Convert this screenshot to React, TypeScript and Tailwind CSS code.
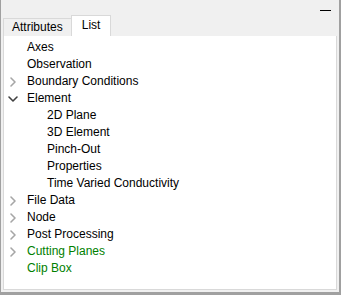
import { ChevronRight, ChevronDown } from "lucide-react";

interface Row {
  label: string;
  level: number;
  arrow?: "right" | "down";
  green?: boolean;
}

const rows: Row[] = [
  { label: "Axes", level: 0 },
  { label: "Observation", level: 0 },
  { label: "Boundary Conditions", level: 0, arrow: "right" },
  { label: "Element", level: 0, arrow: "down" },
  { label: "2D Plane", level: 1 },
  { label: "3D Element", level: 1 },
  { label: "Pinch-Out", level: 1 },
  { label: "Properties", level: 1 },
  { label: "Time Varied Conductivity", level: 1 },
  { label: "File Data", level: 0, arrow: "right" },
  { label: "Node", level: 0, arrow: "right" },
  { label: "Post Processing", level: 0, arrow: "right" },
  { label: "Cutting Planes", level: 0, arrow: "right", green: true },
  { label: "Clip Box", level: 0, green: true },
];

export default function App() {
  return (
    <div
      className="w-[341px] h-[295px] bg-[#a0a0a0] flex flex-col"
      style={{ fontFamily: '"Liberation Sans", Arial, sans-serif' }}
    >
      <div className="flex-1 ml-px mr-[2px] mb-[3px] bg-[#f0f0f0] flex flex-col">
        <div className="h-[15px] flex justify-end items-start pr-[8px]">
          <div className="mt-[10px] w-[11px] h-px bg-black" />
        </div>
        <div className="flex items-end pl-[2px] h-[21px]">
          <div className="h-[18px] px-[8px] border border-b-0 border-[#d9d9d9] bg-[#f0f0f0] text-[12px] leading-[17px] text-black">
            Attributes
          </div>
          <div className="h-[21px] px-[10px] border border-b-0 border-[#d9d9d9] bg-white text-[12px] leading-[19px] text-black -ml-px">
            List
          </div>
        </div>
        <div className="flex-1 ml-[2px] mr-[2px] mb-[2px] bg-white border border-t-0 border-[#d9d9d9] pt-[3px]">
          {rows.map((row) => (
            <div
              key={row.label}
              className="h-[17px] flex items-center text-[12px] leading-[17px]"
              style={{ paddingLeft: row.level * 20 }}
            >
              <span className="w-[23px] pl-px flex items-center justify-start">
                {row.arrow === "right" && (
                  <ChevronRight size={16} strokeWidth={2.4} className="text-[#a6a6a6]" />
                )}
                {row.arrow === "down" && (
                  <ChevronDown size={16} strokeWidth={2.4} className="text-[#404040]" />
                )}
              </span>
              <span className={row.green ? "text-[#008000]" : "text-black"}>{row.label}</span>
            </div>
          ))}
        </div>
      </div>
    </div>
  );
}
